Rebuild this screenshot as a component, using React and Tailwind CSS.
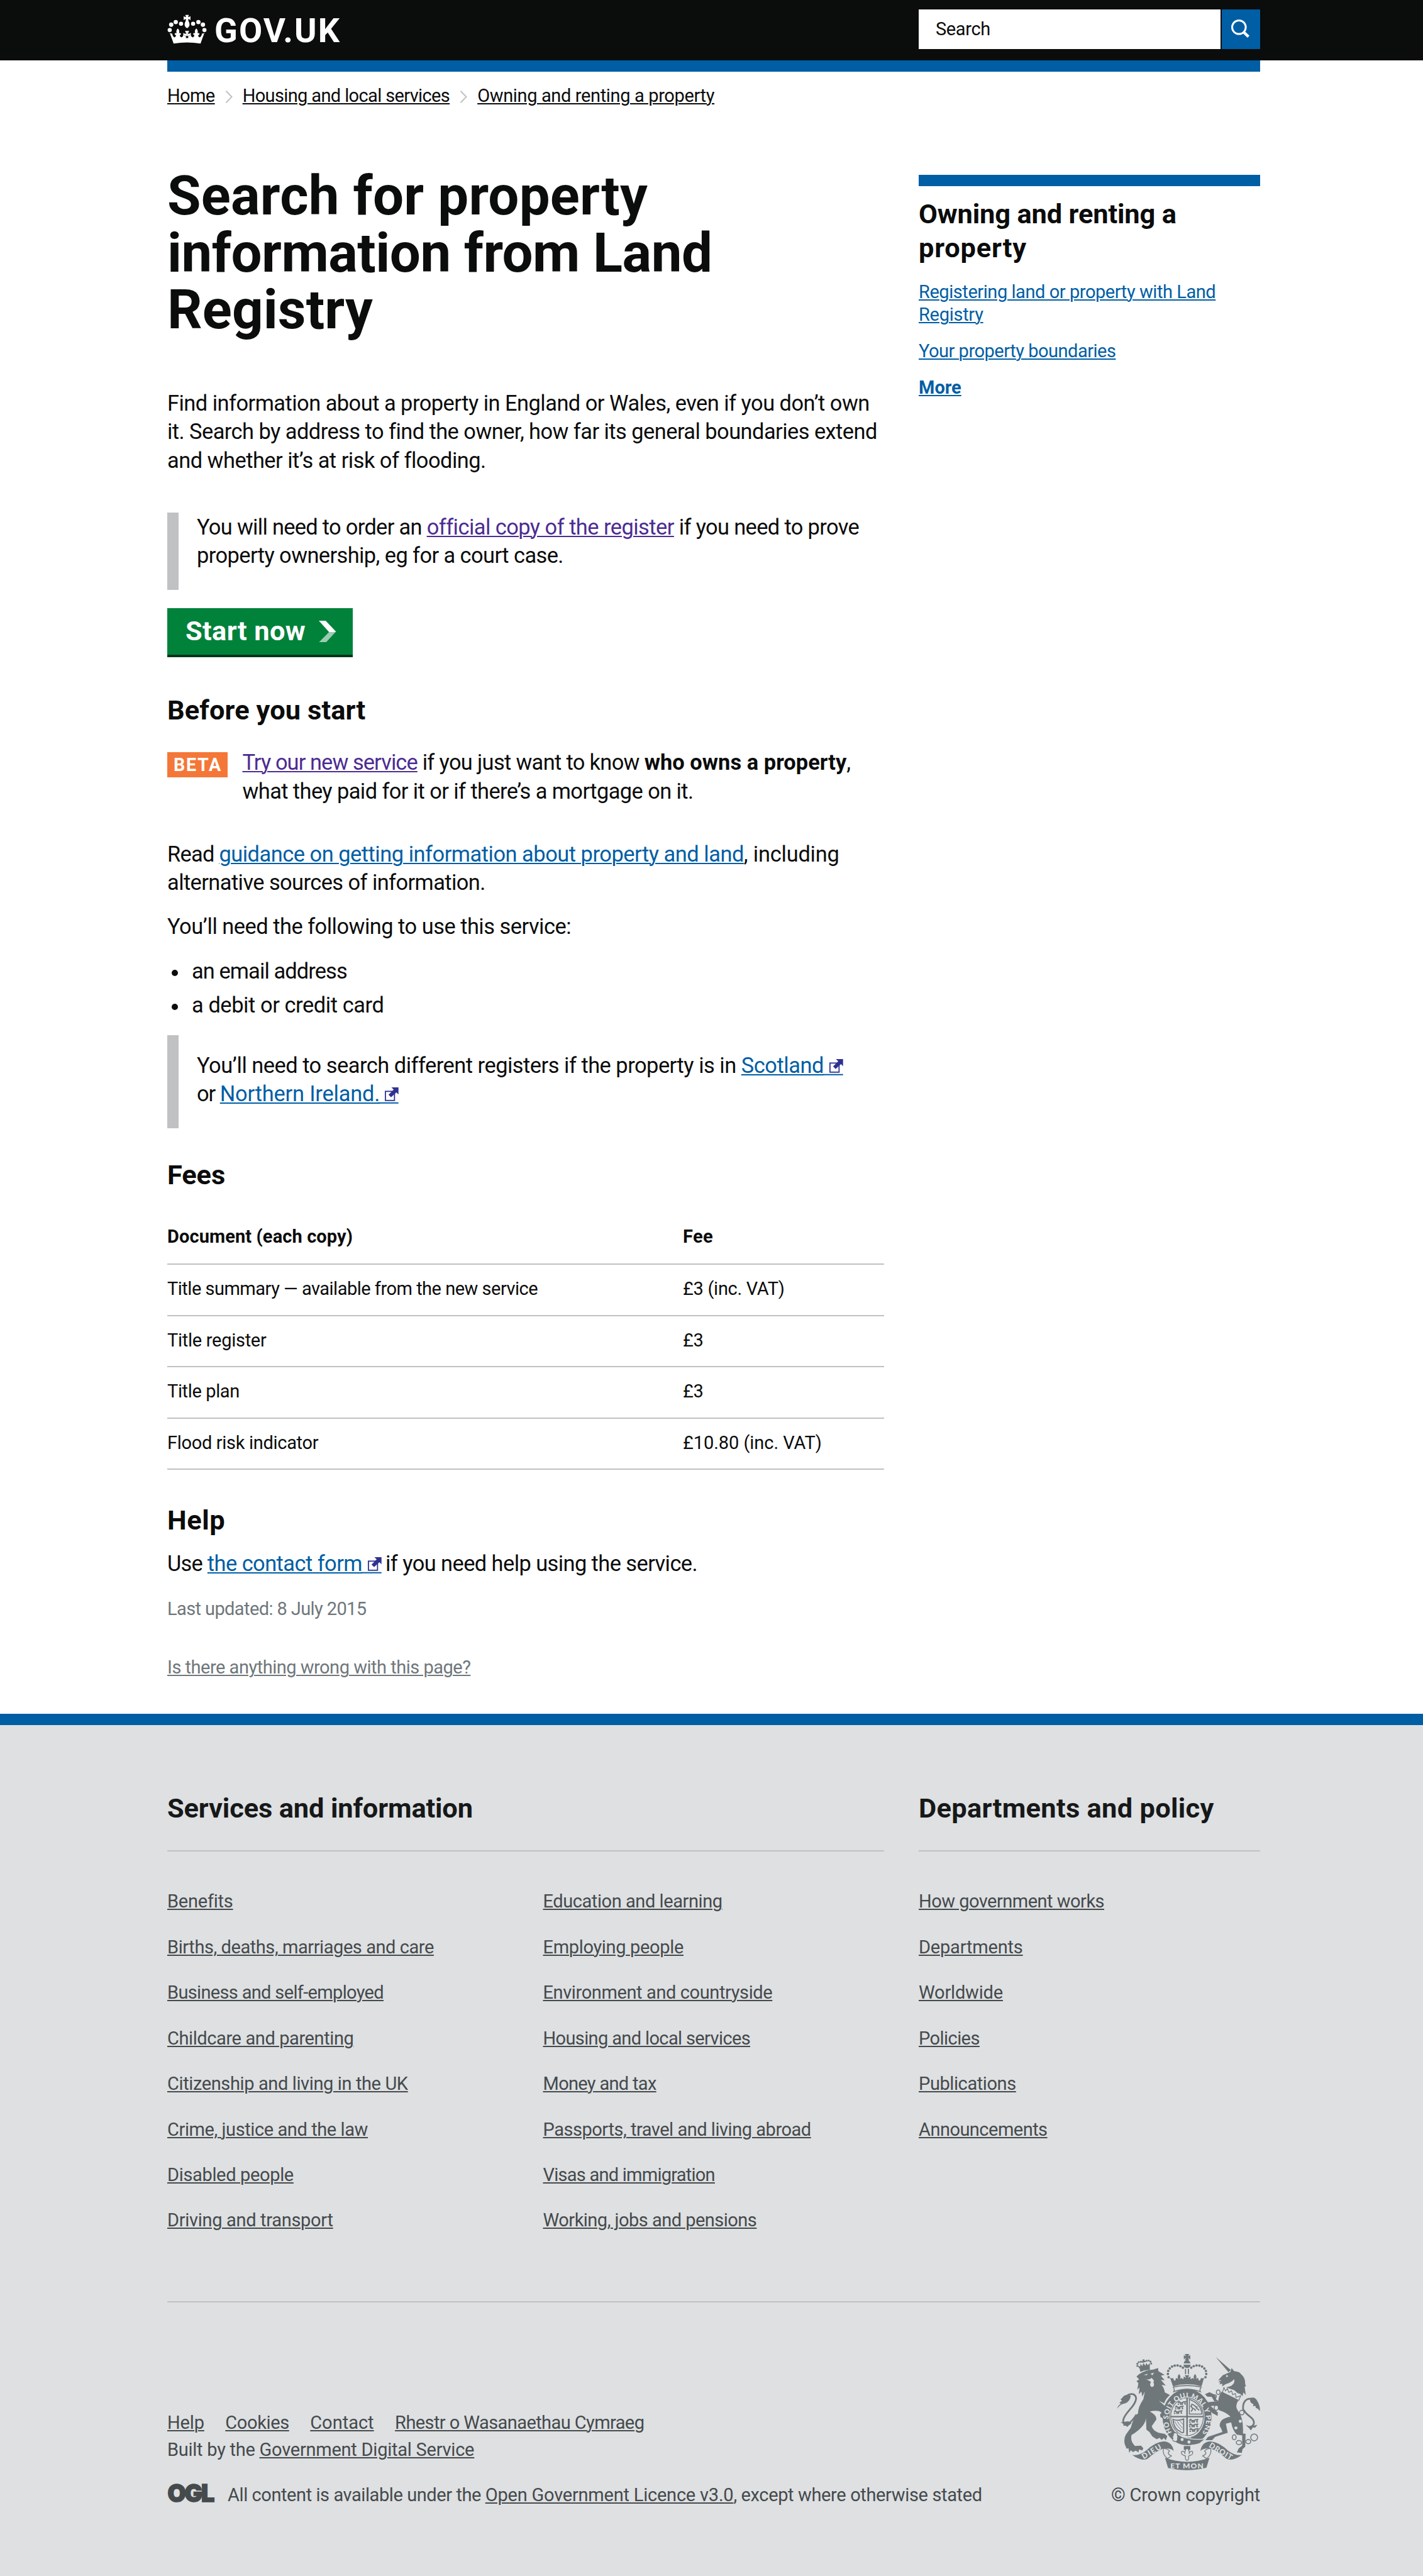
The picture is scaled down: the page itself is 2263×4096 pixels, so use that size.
const SERVICES = [
  ['Benefits', 'tracking-[-0.23px]'],
  ['Births, deaths, marriages and care', 'tracking-[-0.43px]'],
  ['Business and self-employed', 'tracking-[-0.66px]'],
  ['Childcare and parenting', 'tracking-[-0.4px]'],
  ['Citizenship and living in the UK', 'tracking-[-0.38px]'],
  ['Crime, justice and the law', 'tracking-[-0.41px]'],
  ['Disabled people', 'tracking-[-0.34px]'],
  ['Driving and transport', 'tracking-[-0.31px]'],
];
const MORE_SERVICES = [
  ['Education and learning', 'tracking-[-0.43px]'],
  ['Employing people', 'tracking-[-0.33px]'],
  ['Environment and countryside', 'tracking-[-0.39px]'],
  ['Housing and local services', 'tracking-[-0.63px]'],
  ['Money and tax', 'tracking-[-0.68px]'],
  ['Passports, travel and living abroad', 'tracking-[-0.47px]'],
  ['Visas and immigration', 'tracking-[-0.75px]'],
  ['Working, jobs and pensions', 'tracking-[-0.51px]'],
];
const DEPARTMENTS = [
  ['How government works', 'tracking-[-0.51px]'],
  ['Departments', 'tracking-[-0.2px]'],
  ['Worldwide', 'tracking-[-0.19px]'],
  ['Policies', 'tracking-[-0.56px]'],
  ['Publications', 'tracking-[-0.41px]'],
  ['Announcements', 'tracking-[-0.52px]'],
];
const FEES = [
  ['Title summary — available from the new service', 'tracking-[-0.5px]', '£3 (inc. VAT)', 'tracking-[-0.29px]'],
  ['Title register', 'tracking-[-0.28px]', '£3', 'tracking-[-0.29px]'],
  ['Title plan', 'tracking-[-0.37px]', '£3', 'tracking-[-0.29px]'],
  ['Flood risk indicator', 'tracking-[-0.31px]', '£10.80 (inc. VAT)', 'tracking-[-0.06px]'],
];

function A({ className = '', children }) {
  return (
    <a href="#" className={`underline decoration-2 underline-offset-2 ${className}`}>
      {children}
    </a>
  );
}

function Line({ className = '', children }) {
  return <span className={`block whitespace-nowrap ${className}`}>{children}</span>;
}

function CrownMark() {
  const half = (
    <g>
      <circle cx="55" cy="128" r="11" />
      <circle cx="63" cy="100" r="11.5" />
      <circle cx="87" cy="86" r="11.5" />
      <circle cx="115" cy="95" r="11" />
      <path d="M76 200 L54 141 Q60 150 68 146 Q70 164 80 167 Q89 164 88 155 Q81 155 81 149 Q83 142 92 145 Q86 132 98 120 Q110 132 104 145 Q113 142 115 149 Q115 155 108 155 Q108 164 117 167 Q126 165 127 156 L140 158 L141 168 V186 Q106 188 76 200Z" />
      <path d="M127 158V143Q134 149 142 149Q141 140 136 132H147V160H140Q134 153 127 158Z" />
    </g>
  );
  return (
    <svg viewBox="42 46 210 156" className="h-[47px] w-[63px] fill-white">
      {half}
      <g transform="translate(294 0) scale(-1 1)">{half}</g>
      <path d="M137 48h20q-5 7-4 12q7-1 12-6v22q-6-6-12-6q0 6 2 12q5 6 5 16q0 14-13 20q-13-6-13-20q0-10 5-16q2-6 2-12q-6 0-12 6V54q5 5 12 6q1-5-4-12z" />
      <path d="M70 178 Q147 164 224 178 L218 200 Q147 188 76 200Z" />
    </svg>
  );
}

function SearchIcon() {
  return (
    <svg viewBox="0 0 30 30" className="h-[30px] w-[30px] fill-none stroke-white">
      <circle cx="12.3" cy="12.3" r="10.8" strokeWidth="3" />
      <path d="M19.8 20.2 L27.5 27.4" strokeWidth="4.4" />
    </svg>
  );
}

function Chevron() {
  return (
    <svg viewBox="0 0 12 20" className="h-5 w-3 fill-none stroke-[#bfc1c3]">
      <path d="M1.5 0.8 L10.5 10 L1.5 19.2" strokeWidth="2" />
    </svg>
  );
}

function External({ className = '' }) {
  return (
    <svg viewBox="0 0 24 24" className={`inline-block h-[21.7px] w-[21.7px] overflow-visible align-baseline ${className}`}>
      <rect x="1" y="7" width="16" height="16" className="fill-white stroke-[#2e3191]" strokeWidth="2" />
      <path d="M11.5 0H24V12.5L20.3 8.8L11 17.5L6.5 13L15.5 3.9Z" className="fill-[#2e3191]" />
      <path d="M-12 26.3H24V28.5H-12Z" fill="currentColor" />
    </svg>
  );
}

function Fleur({ x, y, s = 1 }) {
  return (
    <path
      transform={`translate(${x} ${y}) scale(${s})`}
      d="M0-24Q12-10 5 4Q18-8 20 6Q18 14 10 12Q8 18 12 22H-12Q-8 18-10 12Q-18 14-20 6Q-18-8-5 4Q-12-10 0-24Z"
    />
  );
}

const BEADS = [
  [461, 224], [457, 207], [459, 191], [467, 178], [479, 168], [493, 163], [508, 162], [523, 166], [536, 174],
];

const PASSANT = 'M0 8q4-8 9-3q6 4 12-1q5-5 9 0l4-6M4 12l-4 5M10 9l3 8M20 8l-3 9M28 8l4 8M2 2l5-4';

function Crest() {
  const bg = 'fill-[#dee0e2]';
  return (
    <svg viewBox="192 102 750 612" className="h-[185px] w-[227px] fill-[#6f777b] stroke-none">
      <defs>
        <path id="garter" d="M478 515 A99 116 0 1 1 640 515" />
      </defs>

      {/* lion */}
      <g transform="rotate(-10 334 165)">
        <path d="M305 172l-6-16 12 8 4-14 8 14 8-16 8 16 8-14 4 14 14-8-6 24q-24-8-48 0z" />
        <path d="M329 130h10v8h6v8h-22v-8h6z" />
        {[[297, 158], [299, 147], [308, 140], [319, 140], [350, 140], [361, 141], [369, 148], [371, 159]].map(([x, y]) => (
          <circle key={x} cx={x} cy={y} r="5" />
        ))}
        <path d="M306 178q26-10 54 0l-2 14q-24-8-50 0z" />
      </g>
      <path d="M292 220L306 208Q340 186 380 184L406 176L407 192L440 212L420 216L440 240L420 238L446 268L424 264Q438 282 441 304L468 318Q442 340 438 362L410 348L450 382Q466 412 468 455L456 458L452 446L442 460L432 452L430 440L418 434L416 420L424 410L410 402Q385 398 362 405Q400 424 396 448L372 482Q380 508 408 516L440 522L454 534L446 556L436 544L424 554L414 543L398 550L376 536L360 512L344 500L342 440Q336 486 266 528Q258 560 284 586L316 584L328 598L322 610L306 604L302 620L288 610L274 618L262 608L254 622L250 598L240 600L230 576Q224 548 236 526L262 490Q276 436 300 414Q300 380 328 340L336 300L322 326L318 300L304 314L308 278L296 290L302 256L292 244L306 236Z" />
      <g className={bg}>
        <path d="M330 212l22-6-6 8zM366 206l18-6-8 14zM338 232q20 10 34-4l12 14-6 18-14-14z" />
        <ellipse cx="374" cy="262" rx="10" ry="13" />
      </g>
      <g className="fill-none stroke-[#6f777b]" strokeWidth="9">
        <path d="M292 420C258 474 222 492 222 452C226 412 288 378 290 336C288 310 262 306 240 322" />
        <path d="M855 410C844 350 872 334 898 338" />
        <path d="M856 396C872 430 916 436 909 470Q904 484 884 486" />
      </g>
      <path d="M192 391Q192 372 210 364L202 358L216 348L208 342L226 322Q242 312 262 322Q258 352 232 362Q200 368 192 391ZM208 462L238 458Q252 452 266 466L242 486L236 478L222 480L226 470Z" />

      {/* unicorn */}
      <path d="M708 117L788 186L776 198ZM722 240L746 214L786 196L792 176L806 192Q838 196 840 206Q866 226 864 262L868 270L861 276L867 318L854 304L850 324L838 312L824 308L806 292L764 278L790 270Q812 254 806 234Q790 252 762 260L742 272L744 258L728 262L734 252L722 250L740 240Z" />
      <path d="M740 300L828 346Q806 378 828 404Q856 440 852 520L866 522L864 590L850 602L846 622L820 620L830 598L848 584L848 530L820 526Q798 506 790 462L762 468L772 516L706 538L690 555L655 555L668 538L744 512Q740 496 730 482Q726 442 786 432Q770 412 728 398L704 374L682 376L720 410L719 428L690 412L668 386L648 386L664 356L722 350Q724 322 740 300Z" />
      <path d="M652 314L676 303L704 316L712 342L724 350L702 352L688 328L664 326Z" />
      <path d="M752 278l8 18 10-12 8 20 14-8 6 20 14-6 4 20 24-8-10 24L744 304z" className="fill-[#dee0e2] stroke-[#6f777b]" strokeWidth="4" />
      <path d="M888 336Q914 322 928 350Q942 372 942 402Q932 388 918 384L920 376L904 376L908 366Q888 362 888 336ZM866 474L890 484L928 474L916 490L904 488L894 504L884 492Z" />
      <g className="fill-none stroke-[#6f777b]" strokeWidth="5">
        <ellipse cx="722" cy="303" rx="10" ry="12" />
        <circle cx="704" cy="325" r="8" />
        <ellipse cx="712" cy="385" rx="11" ry="13" className={bg} />
        <circle cx="846" cy="410" r="12" className={bg} />
        <ellipse cx="806" cy="540" rx="10" ry="13" />
        <ellipse cx="831" cy="568" rx="14" ry="11" />
        <ellipse cx="880" cy="563" rx="13" ry="11" />
        <circle cx="911" cy="541" r="18" />
      </g>
      <g className={bg}>
        <circle cx="838" cy="456" r="8" />
        <circle cx="815" cy="491" r="8" />
        <circle cx="768" cy="218" r="5" />
      </g>

      {/* royal crown */}
      <path d="M546 102h24l-7 12 12-6v22l-12-7 7 13h-24l7-13-12 7v-22l12 6zM541 152q0-16 17-16t17 16zM539 158h38q-2 18-19 18t-19-18z" />
      {BEADS.map(([x, y]) => (
        <g key={x}>
          <circle cx={x} cy={y} r="6.5" />
          <circle cx={1116 - x} cy={y} r="6.5" />
        </g>
      ))}
      <path d="M547 180h6v28h-6zM562 180h6v28h-6zM546 214h24l-8 14 14-8v20h-36v-20l14 8z" />
      <Fleur x={516} y={230} s={0.95} />
      <Fleur x={600} y={230} s={0.95} />
      <path d="M468 226q10 8 16 2l6 14q68-20 136 0l6-14q6 6 16-2l-14 46q-76-22-150 0z" />
      <path d="M486 276q72-16 146 0q-10 16-4 24q-70-26-140 0q6-10-2-24z" className="fill-[#dee0e2] stroke-[#6f777b]" strokeWidth="5" />

      {/* garter and shield */}
      <ellipse cx="558" cy="434" rx="129" ry="148" />
      <ellipse cx="558" cy="434" rx="92" ry="108" className={bg} />
      <ellipse cx="558" cy="432" rx="86" ry="100" className="fill-none stroke-[#6f777b]" strokeWidth="4" />
      <text className="fill-[#dee0e2] font-['Lato'] text-[37px] font-black">
        <textPath href="#garter" textLength="505" lengthAdjust="spacing">HO SOIT QUI MAL Y PENSE</textPath>
      </text>
      <path d="M554 332h8v198h-8zM470 428h176v7H470z" />
      <g className="fill-none stroke-[#6f777b]" strokeWidth="6">
        {[[510, 352], [496, 376], [490, 400]].map(([x, y]) => (
          <path key={y} transform={`translate(${x} ${y}) scale(1.25 1)`} d={PASSANT} />
        ))}
        {[[570, 446], [570, 470], [572, 494]].map(([x, y]) => (
          <path key={y} transform={`translate(${x} ${y}) scale(1.35 1)`} d={PASSANT} />
        ))}
        <path d="M570 340v78h66q-4-54-66-78z" strokeWidth="5" />
        <path d="M578 404q10-6 8-18q-10-8-2-20l12 6q10 12 18 8M590 386l14 14M604 384l18 14M582 372l-6 8" />
        <path d="M484 446q24 10 56-2v70q-10 6-20-6q-32-12-36-62z" />
        <path d="M492 456q14 26 36 46M506 456q10 18 28 36M520 454l18 20" strokeWidth="3" />
      </g>
      <path d="M500 528Q530 556 590 556Q620 556 652 548L622 572Q560 592 500 560Z" />
      <path d="M510 524q50 36 144 24M520 518q30 20 60 24" className="fill-none stroke-[#dee0e2]" strokeWidth="4" />
      <path d="M486 520q16-10 22 4q-4 8 4 14q-6 2-4 12q0 14-16 12q-14-4-8-18q-6-4 0-10q4-8 2-14z" className="fill-[#dee0e2] stroke-[#6f777b]" strokeWidth="4" />
      <g className={bg}>
        <circle cx="532" cy="552" r="8" />
        <circle cx="568" cy="565" r="8" />
      </g>

      {/* motto ribbon */}
      <path d="M541 586h34v20h-34z" />
      <g className="fill-[#dee0e2] stroke-[#6f777b]" strokeWidth="4">
        <path d="M558 596q16 16 10 32q4-18 18-14q6 14-8 20q-10 2-12 6q4 18-8 22q-12-4-8-22q-2-4-12-6q-14-6-8-20q14-4 18 14q-6-16 10-32z" />
        <path d="M434 598q20 2 32 14q-18 14 10 26l-20 14q-30-20-22-54zM682 598q-20 2-32 14q18 14-10 26l20 14q30-20 22-54z" />
      </g>
      <path d="M268 632Q300 640 340 612Q392 564 434 562Q478 562 488 612Q474 596 432 600Q396 612 352 652Q322 670 268 632ZM848 632Q816 640 776 612Q724 564 682 562Q638 562 628 612Q642 596 684 600Q720 612 764 652Q794 670 848 632Z" />
      <path d="M442 648Q558 690 676 648L660 700Q558 726 458 702Z" />
      <g className="fill-[#dee0e2] font-['Lato'] text-[40px] font-black">
        <text x="330" y="656" transform="rotate(-31 330 656)" textLength="112">DIEU</text>
        <text x="670" y="590" transform="rotate(31 670 590)" textLength="136">DROIT</text>
        <text x="470" y="703" textLength="174">ET MON</text>
      </g>
    </svg>
  );
}

function FooterList({ items, className }) {
  return (
    <ul className={className}>
      {items.map(([label, track]) => (
        <li key={label} className="h-[72.43px] whitespace-nowrap leading-9">
          <A className={track}>{label}</A>
        </li>
      ))}
    </ul>
  );
}

const H2 = 'whitespace-nowrap text-[43.4px] font-bold leading-[54px]';
const BODY = 'text-[34.4px] leading-[45.27px]';
const BLUE = 'text-[#005ea5]';
const PURPLE = 'text-[#4c2c92]';

export default function App() {
  return (
    <div className="min-h-[4096px] w-[2263px] overflow-hidden bg-white font-[Roboto,sans-serif] text-[29px] text-[#0b0c0c]">
      <header className="h-24 bg-[#0b0c0c]">
        <div className="ml-[266px] flex w-[1738px] items-start">
          <div className="flex w-[1195px] pt-[23px]">
            <CrownMark />
            <span className="-mt-[6px] ml-[12px] text-[54px] font-bold leading-[63px] tracking-[2.1px] text-white">GOV.UK</span>
          </div>
          <div className="mt-[14.5px] flex h-[63px] w-[543px] gap-[2px]">
            <div className="flex-1 bg-white pl-[27px] leading-[63px] tracking-[-0.37px]">Search</div>
            <div className="flex w-[61.5px] items-center justify-center bg-[#005ea5]">
              <SearchIcon />
            </div>
          </div>
        </div>
      </header>

      <div className="ml-[266px] h-[18px] w-[1738px] bg-[#005ea5]" />

      <nav className="ml-[266px] flex h-[72px] items-start gap-4 whitespace-nowrap pt-[20px] leading-9">
        <A className="tracking-[-0.6px]">Home</A>
        <span className="pt-[10px]"><Chevron /></span>
        <A className="tracking-[-0.63px]">Housing and local services</A>
        <span className="pt-[10px]"><Chevron /></span>
        <A className="tracking-[-0.36px]">Owning and renting a property</A>
      </nav>

      <main className="ml-[266px] flex h-[2539.3px] w-[1738px] justify-between">
        <div className="w-[1140px] pt-20">
          <h1 className="text-[87px] font-bold leading-[90.5px]">
            <Line className="tracking-[0.25px]">Search for property</Line>
            <Line className="tracking-[-0.5px]">information from Land</Line>
            <Line className="tracking-[0.1px]">Registry</Line>
          </h1>

          <p className={`mt-[81.5px] ${BODY}`}>
            <Line className="tracking-[-0.52px]">Find information about a property in England or Wales, even if you don’t own</Line>
            <Line className="tracking-[-0.54px]">it. Search by address to find the owner, how far its general boundaries extend</Line>
            <Line className="tracking-[-0.5px]">and whether it’s at risk of flooding.</Line>
          </p>

          <div className={`mt-[60.7px] h-[122.3px] border-l-[18px] border-[#bfc1c3] pl-[29px] pt-[0.6px] ${BODY}`}>
            <Line>
              <span className="tracking-[-0.69px]">You will need to order an </span>
              <A className={`${PURPLE} tracking-[-0.53px]`}>official copy of the register</A>
              <span className="tracking-[-0.64px]"> if you need to prove</span>
            </Line>
            <Line className="tracking-[-0.58px]">property ownership, eg for a court case.</Line>
          </div>

          <div className="mt-[29.3px] flex h-[78px] w-[295px] items-start border-b-[4px] border-[#003618] bg-[#00823b] pl-[29px] pt-[10px] text-[43.4px] font-bold leading-[54px] text-white">
            <span className="tracking-[0.36px]">Start now</span>
            <svg viewBox="0 0 90 114" className="ml-[21px] mt-[10px] h-[34.4px] w-[27.2px] fill-white">
              <path d="M0 0H36L90 57L88 60H54Z" />
              <path d="M54 60H88L38 114H0Z" opacity="0.6" />
            </svg>
          </div>

          <h2 className={`mt-[58px] tracking-[0.1px] ${H2}`}>Before you start</h2>

          <div className={`mt-[33.2px] flex ${BODY}`}>
            <span className="mt-[5.5px] h-10 w-24 bg-[#f47738] pl-[10px] text-[28.6px] font-bold leading-[40px] tracking-[1.7px] text-white">BETA</span>
            <div className="ml-[23.5px]">
              <Line>
                <A className={`${PURPLE} tracking-[-0.91px]`}>Try our new service</A>
                <span className="tracking-[-0.66px]"> if you just want to know </span>
                <b className="font-bold tracking-[0.05px]">who owns a property</b>,
              </Line>
              <Line className="tracking-[-0.58px]">what they paid for it or if there’s a mortgage on it.</Line>
            </div>
          </div>

          <p className={`mt-[55.1px] ${BODY}`}>
            <Line>
              <span className="tracking-[-0.74px]">Read </span>
              <A className={`${BLUE} tracking-[-0.48px]`}>guidance on getting information about property and land</A>
              <span className="tracking-[-0.2px]">, including</span>
            </Line>
            <Line className="tracking-[-0.57px]">alternative sources of information.</Line>
          </p>

          <p className={`mt-[24.9px] tracking-[-0.5px] ${BODY}`}>You’ll need the following to use this service:</p>

          <ul className={`mt-[25.9px] ${BODY}`}>
            <li className="flex h-[53.8px] tracking-[-0.9px]">
              <span className="ml-[7px] mr-[22.5px] mt-[20px] h-[9.5px] w-[9.5px] rounded-full bg-[#0b0c0c]" />
              an email address
            </li>
            <li className="flex h-[53.8px] tracking-[-0.42px]">
              <span className="ml-[7px] mr-[22.5px] mt-[20px] h-[9.5px] w-[9.5px] rounded-full bg-[#0b0c0c]" />
              a debit or credit card
            </li>
          </ul>

          <div className={`mt-[16px] h-[148px] border-l-[18px] border-[#bfc1c3] pl-[29px] pt-[25.6px] ${BODY}`}>
            <Line>
              <span className="tracking-[-0.5px]">You’ll need to search different registers if the property is in </span>
              <A className={`${BLUE} tracking-[-0.44px]`}>Scotland<External className="ml-[9px]" /></A>
            </Line>
            <Line>
              <span className="tracking-[-1.02px]">or </span>
              <A className={`${BLUE} tracking-[-0.2px]`}>Northern Ireland.<External className="ml-[8px]" /></A>
            </Line>
          </div>

          <h2 className={`mt-[48.4px] tracking-[-0.1px] ${H2}`}>Fees</h2>

          <table className="mt-[32px] w-full border-collapse text-left leading-9">
            <thead>
              <tr className="h-[82px] border-b-2 border-[#bfc1c3] align-top">
                <th className="w-[820px] p-0 pt-[20px] font-bold tracking-[0.11px]">Document (each copy)</th>
                <th className="p-0 pt-[20px] font-bold tracking-[0.34px]">Fee</th>
              </tr>
            </thead>
            <tbody>
              {FEES.map(([doc, docTrack, fee, feeTrack]) => (
                <tr key={doc} className="h-[81.5px] border-b-2 border-[#bfc1c3] align-top">
                  <td className={`p-0 pt-[20px] ${docTrack}`}>{doc}</td>
                  <td className={`p-0 pt-[20px] ${feeTrack}`}>{fee}</td>
                </tr>
              ))}
            </tbody>
          </table>

          <h2 className={`mt-[54px] tracking-[0.59px] ${H2}`}>Help</h2>
          <p className={`mt-[18.1px] whitespace-nowrap ${BODY}`}>
            <span className="tracking-[-0.75px]">Use </span>
            <A className={`${BLUE} tracking-[-0.54px]`}>the contact form<External className="ml-[9px]" /></A>
            <span className="ml-[6.5px] tracking-[-0.57px]">if you need help using the service.</span>
          </p>
          <p className="mt-[30.8px] leading-9 tracking-[-0.6px] text-[#6f777b]">Last updated: 8 July 2015</p>
          <p className="mt-[57.8px] leading-9 text-[#6f777b]">
            <A className="tracking-[-0.49px]">Is there anything wrong with this page?</A>
          </p>
        </div>

        <aside className="mt-[92px] h-fit w-[543px] border-t-[18px] border-[#005ea5] pt-[18px]">
          <h2 className="text-[43.4px] font-bold leading-[54.4px]">
            <Line className="tracking-[-0.15px]">Owning and renting a</Line>
            <Line className="tracking-[0.8px]">property</Line>
          </h2>
          <div className={`mt-[23px] leading-[36.2px] ${BLUE}`}>
            <Line>
              <A className="tracking-[-0.44px]">Registering land or property with Land</A>
            </Line>
            <Line>
              <A className="tracking-[-0.28px]">Registry</A>
            </Line>
            <Line className="mt-[22px]">
              <A className="tracking-[-0.49px]">Your property boundaries</A>
            </Line>
            <Line className="mt-[21.5px] font-bold">
              <A>More</A>
            </Line>
          </div>
        </aside>
      </main>

      <footer className="h-[1370.7px] border-t-[18px] border-[#005ea5] bg-[#dee0e2] pl-[266px] pt-[105.7px] text-[#454a4c]">
        <div className="flex w-[1738px] justify-between border-b-2 border-[#bfc1c3] pb-[74px]">
          <section className="w-[1140px]">
            <h2 className={`border-b-2 border-[#bfc1c3] pb-[39.5px] tracking-[-0.14px] text-[#171819] ${H2}`}>Services and information</h2>
            <div className="mt-[61px] flex">
              <FooterList items={SERVICES} className="w-[597.5px]" />
              <FooterList items={MORE_SERVICES} />
            </div>
          </section>
          <section className="w-[543px]">
            <h2 className={`border-b-2 border-[#bfc1c3] pb-[39.5px] tracking-[0.3px] text-[#171819] ${H2}`}>Departments and policy</h2>
            <FooterList items={DEPARTMENTS} className="mt-[61px]" />
          </section>
        </div>

        <div className="flex w-[1738px] justify-between whitespace-nowrap leading-9">
          <div className="pt-[173px]">
            <div className="flex gap-[33.5px]">
              <A className="tracking-[-0.14px]">Help</A>
              <A className="tracking-[-0.38px]">Cookies</A>
              <A>Contact</A>
              <A className="tracking-[-0.58px]">Rhestr o Wasanaethau Cymraeg</A>
            </div>
            <p className="mt-[7.5px]">
              <span className="tracking-[-0.26px]">Built by the </span>
              <A className="tracking-[-0.24px]">Government Digital Service</A>
            </p>
            <div className="mt-[36px] flex">
              <svg viewBox="0 0 74 30" className="mr-[22px] h-[30px] w-[74px] overflow-visible fill-[#454a4c] stroke-[#454a4c]">
                <text x="0.4" y="28.9" textLength="73" lengthAdjust="spacingAndGlyphs" strokeWidth="1.6" className="font-[Inter] text-[38.5px] font-black tracking-[-2px]">OGL</text>
              </svg>
              <p>
                <span className="tracking-[-0.42px]">All content is available under the </span>
                <A className="tracking-[-0.22px]">Open Government Licence v3.0</A>
                <span className="tracking-[-0.36px]">, except where otherwise stated</span>
              </p>
            </div>
          </div>
          <div className="flex flex-col items-end pt-[82px]">
            <Crest />
            <p className="mt-[21px] tracking-[-0.18px]">© Crown copyright</p>
          </div>
        </div>
      </footer>
    </div>
  );
}
